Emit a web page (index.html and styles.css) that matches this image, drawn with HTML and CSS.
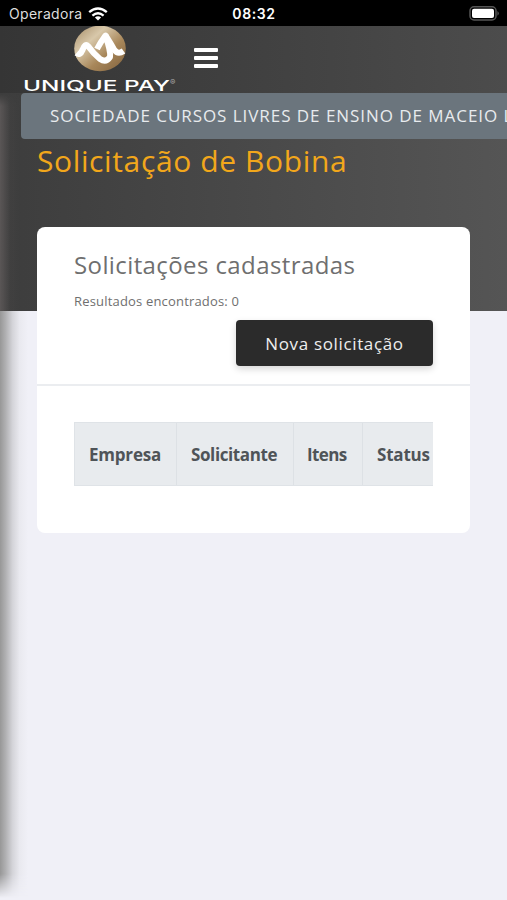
FILE: index.html
```html
<!DOCTYPE html>
<html lang="pt-BR">
<head>
<meta charset="utf-8">
<title>Solicitação de Bobina</title>
<link rel="stylesheet" href="styles.css">
</head>
<body>
<div class="statusbar">
  <div class="carrier"><span>Operadora</span>
    <svg width="20" height="14" viewBox="0 0 20 14" fill="none" stroke="#fff" stroke-width="2.4"><path d="M1.2 5.2Q10-2.2 18.8 5.2M4.4 8.6q5.6-4.5 11.2 0"/><path d="M10 13.4 6.9 10.5q3.1-2.3 6.2 0z" fill="#fff" stroke="none"/></svg>
  </div>
  <time class="clock">08:32</time>
  <svg class="battery" width="32" height="15" viewBox="0 0 32 15"><rect x="1" y=".8" width="26" height="13.2" rx="4" fill="#000" stroke="#555" stroke-width="1.5"/><rect x="3" y="2.8" width="22" height="9.2" rx="2" fill="#fff"/><path d="M28.5 5q2.5 2.4 0 4.8z" fill="#666"/></svg>
</div>
<header class="header">
  <div class="brand">
    <svg width="160" height="67" viewBox="0 0 160 67">
      <defs><linearGradient id="gold" x1="0" y1="0" x2="1" y2="1"><stop offset="0" stop-color="#a38a65"/><stop offset=".32" stop-color="#d8c8aa"/><stop offset=".62" stop-color="#a8875a"/><stop offset="1" stop-color="#80613d"/></linearGradient></defs>
      <ellipse cx="80" cy="22.500" rx="25.800" ry="22.800" fill="url(#gold)"/>
      <path class="swoosh" d="M56.500 27Q60 30 62.500 24Q65 17 68 20Q73 27 80 33Q86 37 90 31Q91 26 85.500 9.500Q80 17 77 23"/>
      <path class="swoosh" d="M85.500 9.500Q91 18 94 23.500Q98 29 103.500 25"/>
      <text class="wordmark" x="3" y="64.500" textLength="147" lengthAdjust="spacingAndGlyphs">UNIQUE PAY</text>
      <text class="registered" x="150" y="59">®</text>
    </svg>
  </div>
  <button class="menu" aria-label="Menu"><i></i><i></i><i></i></button>
</header>
<main class="page">
  <div class="company">SOCIEDADE CURSOS LIVRES DE ENSINO DE MACEIO LTDA</div>
  <h1>Solicitação de Bobina</h1>
  <section class="card">
    <div class="card-head">
      <h2>Solicitações cadastradas</h2>
      <p>Resultados encontrados: 0</p>
      <button class="new">Nova solicitação</button>
    </div>
    <div class="card-body">
      <div class="table">
        <div class="cell empresa">Empresa</div><div class="cell solicitante">Solicitante</div><div class="cell itens">Itens</div><div class="cell status">Status</div>
      </div>
    </div>
  </section>
</main>
<div class="edge"></div>
</body>
</html>
```
FILE: styles.css
```css
* { box-sizing: border-box; }
body {
  margin: 0;
  width: 100%;
  height: 900px;
  overflow: hidden;
  font-family: "Open Sans", sans-serif;
  background: linear-gradient(90deg, #3d3d3d, #555) 0 0 / 100% 311px no-repeat #f0f0f7;
}
.statusbar {
  display: grid;
  grid-template-columns: 1fr auto 1fr;
  align-items: center;
  height: 26px;
  padding: 1px 6px 0 9px;
  background: #000;
  color: #fff;
}
.carrier { display: flex; align-items: center; gap: 6px; font: 14px Inter, sans-serif; color: #ddd; letter-spacing: .3px; }
.clock { margin-left: -2px; font: 600 14px Inter, sans-serif; letter-spacing: .6px; }
.battery { justify-self: end; }
.header {
  display: flex;
  height: 67px;
  padding-left: 20px;
  background: linear-gradient(90deg, #353535, #4c4c4c);
}
.brand { width: 174px; }
.brand svg { display: block; }
.swoosh { fill: none; stroke: #fff; stroke-width: 6; stroke-linejoin: round; }
.wordmark { font: 500 15px Inter, sans-serif; fill: #fff; }
.registered { font: 8px Inter, sans-serif; fill: #aaa; }
.menu { display: flex; flex-direction: column; gap: 4px; width: 24px; padding: 22px 0 0; border: 0; background: none; }
.menu i { width: 24px; height: 4px; border-radius: 1px; background: #fff; }
.company {
  height: 46px;
  margin-left: 21px;
  padding-left: 29px;
  border-radius: 4px 0 0 4px;
  background: #6b757d;
  color: #e8ebee;
  font-size: 17px;
  letter-spacing: .95px;
  line-height: 46px;
  white-space: nowrap;
  overflow: hidden;
}
h1 { margin: 0 0 0 37px; height: 88px; color: #f2a71b; font-size: 30px; font-weight: 400; letter-spacing: .62px; line-height: 44px; white-space: nowrap; }
.card { width: 433px; height: 306px; margin-left: 37px; border-radius: 8px; background: #fff; overflow: hidden; }
.card-head { display: flex; flex-direction: column; height: 159px; padding: 20px 37px 0; border-bottom: 2px solid #ebedf0; color: #6f6f6f; }
h2 { margin: 0; font-size: 24px; font-weight: 400; letter-spacing: .4px; line-height: 36px; }
p { margin: 8px 0 1px; font-size: 13px; letter-spacing: .18px; line-height: 20px; }
.new {
  align-self: flex-end;
  width: 197px;
  height: 46px;
  margin-top: 8px;
  border: 0;
  border-radius: 4px;
  background: #2b2b2b;
  color: #eee;
  font: 17px "Open Sans", sans-serif;
  letter-spacing: .65px;
  box-shadow: 0 3px 7px rgba(0, 0, 0, .16);
}
.card-body { padding: 36px 37px; }
.table { display: flex; height: 64px; overflow: hidden; border: solid #dfe3e7; border-width: 1px 0 1px 1px; background: #e8ebee; }
.cell { flex: none; padding-left: 14px; border-right: 1px solid #dde1e5; color: #4f5458; font-size: 17px; font-weight: 700; letter-spacing: -.4px; line-height: 64px; }
.empresa { width: 102px; letter-spacing: -.2px; }
.solicitante { width: 117px; }
.itens { width: 69px; padding-left: 13px; letter-spacing: -.6px; }
.status { width: 110px; letter-spacing: -.2px; }
.edge {
  position: absolute;
  left: 0;
  top: 94px;
  width: 28px;
  height: 806px;
  background:
    linear-gradient(90deg, #5a5656, rgba(70, 69, 69, .4) 50%, rgba(61, 61, 61, 0)) 0 0 / 20px 217px no-repeat,
    linear-gradient(90deg, #979797, #b0b0b2 20%, #d4d4d9 45%, #e9e9ef 70%, #f0f0f7) 0 217px / 28px 589px no-repeat;
  mask-image: linear-gradient(transparent, #000 12px, #000 780px, transparent 804px);
}
```
